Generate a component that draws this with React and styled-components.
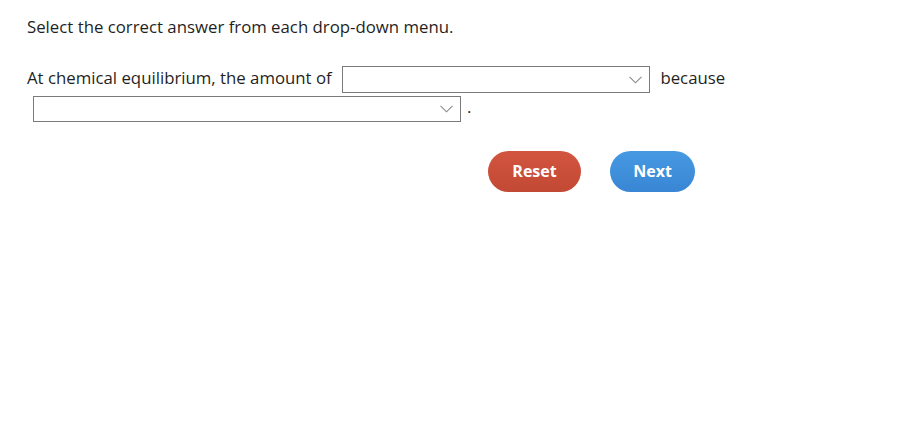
import React, { useState } from 'react';
import styled, { createGlobalStyle } from 'styled-components';

const GlobalStyle = createGlobalStyle`
  body {
    margin: 0;
    background: #ffffff;
    font-family: "Open Sans", "Noto Sans", sans-serif;
    color: #1f1f1f;
  }
`;

const Page = styled.div`
  padding: 15px 27px 0 27px;
`;

const Instruction = styled.p`
  margin: 0;
  font-size: 16.8px;
  line-height: 24px;
`;

const Question = styled.div`
  margin-top: 25px;
  font-size: 16.8px;
  line-height: 28px;
  max-width: 870px;
`;

const SelectBox = styled.span`
  position: relative;
  display: inline-block;
  vertical-align: middle;
  width: ${(p) => p.$width}px;
  height: ${(p) => p.$height}px;
  margin: 0 6px;
  box-sizing: border-box;
  border: 1px solid #7a7a7a;
  background: #ffffff;
`;

const Chevron = styled.svg`
  position: absolute;
  right: 7px;
  top: 50%;
  margin-top: -4px;
  width: 13px;
  height: 8px;
`;

const ButtonRow = styled.div`
  display: flex;
  gap: 29px;
  padding-left: 461px;
  margin-top: 29px;
`;

const Button = styled.button`
  width: ${(p) => p.$width}px;
  height: 41px;
  padding: 0;
  border: none;
  border-radius: 21px;
  color: #ffffff;
  font-family: "Open Sans", "Noto Sans", sans-serif;
  font-weight: 700;
  font-size: 16px;
  cursor: pointer;
  background: ${(p) =>
    p.$variant === 'reset'
      ? 'linear-gradient(#d2553f, #c24934)'
      : 'linear-gradient(#4799e2, #3886d4)'};
`;

const Arrow = () => (
  <Chevron viewBox="0 0 13 8">
    <path d="M0.5 0.8 L6.5 6.8 L12.5 0.8" fill="none" stroke="#8a8a8a" strokeWidth="1.1" />
  </Chevron>
);

const App = () => {
  const [answers] = useState(['', '']);

  return (
    <Page>
      <GlobalStyle />
      <Instruction>Select the correct answer from each drop-down menu.</Instruction>
      <Question>
        At chemical equilibrium, the amount of{' '}
        <SelectBox $width={308} $height={27} title={answers[0]}>
          <Arrow />
        </SelectBox>{' '}
        because{' '}
        <SelectBox $width={428} $height={26} title={answers[1]}>
          <Arrow />
        </SelectBox>
        .
      </Question>
      <ButtonRow>
        <Button $variant="reset" $width={93}>Reset</Button>
        <Button $variant="next" $width={85}>Next</Button>
      </ButtonRow>
    </Page>
  );
};

export default App;
